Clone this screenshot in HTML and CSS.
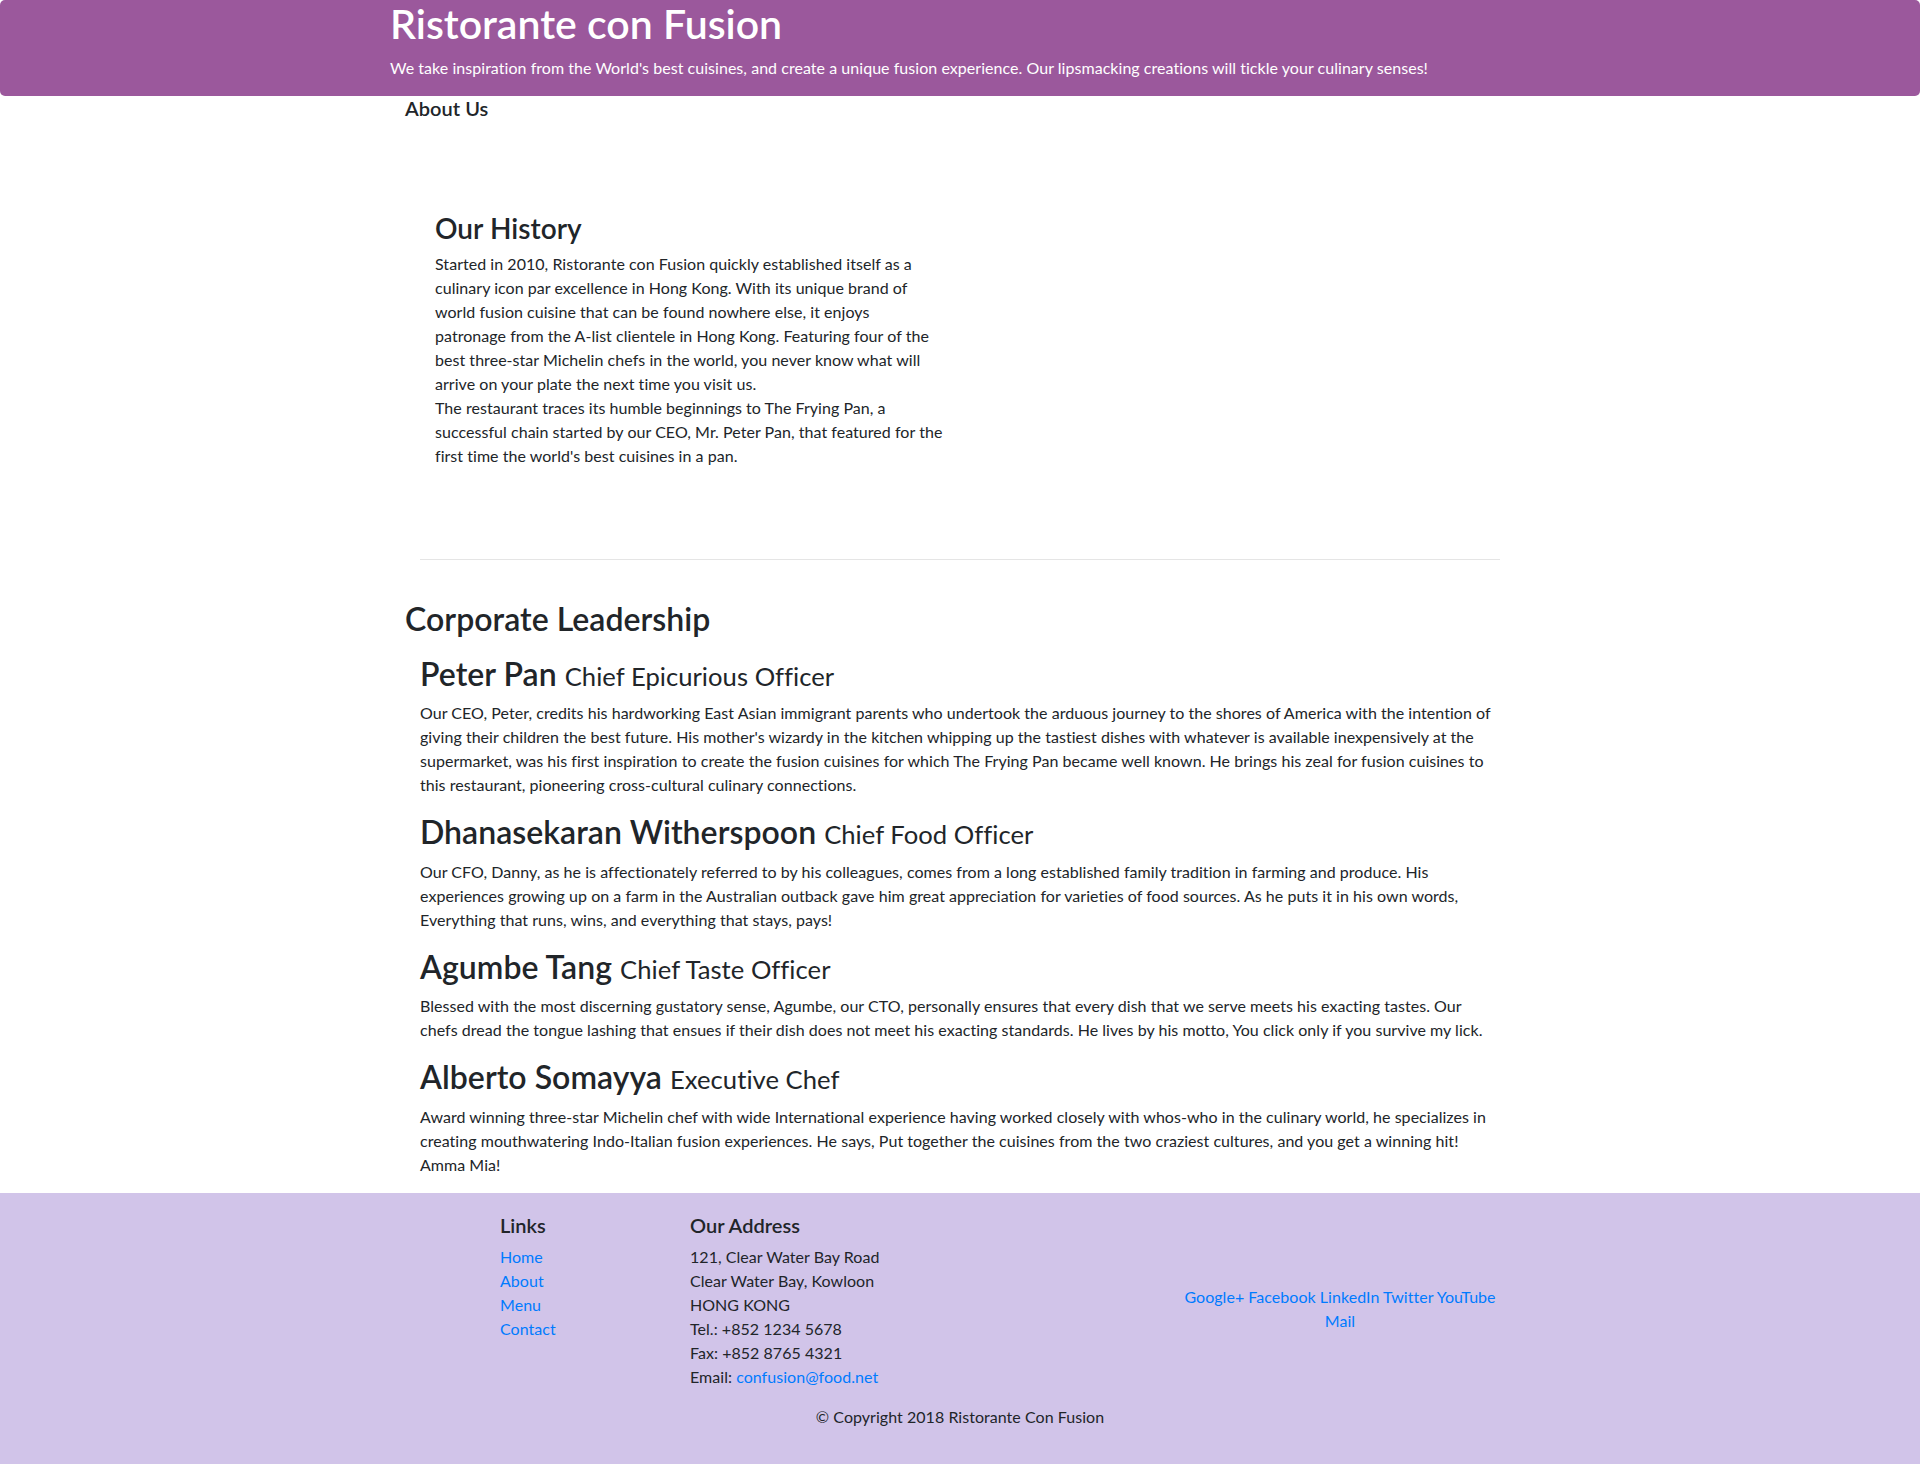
FILE: index.html
```html
<!DOCTYPE html>
<html lang="en">
<head>
<meta charset="utf-8">
<title>Ristorante con Fusion - About Us</title>
<link rel="stylesheet" href="styles.css">
</head>
<body>
<header class="hero">
  <div class="hero-inner">
    <h1 class="hero-title">Ristorante con Fusion</h1>
    <p class="hero-text">We take inspiration from the World's best cuisines, and create a unique fusion experience. Our lipsmacking creations will tickle your culinary senses!</p>
  </div>
</header>

<main class="container">
  <h3 class="page-title">About Us</h3>

  <section class="history">
    <h3 class="history-title">Our History</h3>
    <p class="history-text">Started in 2010, Ristorante con Fusion quickly established itself as a culinary icon par excellence in Hong Kong. With its unique brand of world fusion cuisine that can be found nowhere else, it enjoys<br>patronage from the A-list clientele in Hong Kong. Featuring four of the best three-star Michelin chefs in the world, you never know what will arrive on your plate the next time you visit us.<br>The restaurant traces its humble beginnings to The Frying Pan, a successful chain started by our CEO, Mr. Peter Pan, that featured for the first time the world's best cuisines in a pan.</p>
  </section>

  <hr class="divider">

  <h2 class="section-title">Corporate Leadership</h2>

  <div class="leaders">
    <div class="leader">
      <h2 class="leader-name">Peter Pan <small class="leader-role">Chief Epicurious Officer</small></h2>
      <p class="leader-text">Our CEO, Peter, credits his hardworking East Asian immigrant parents who undertook the arduous journey to the shores of America with the intention of giving their children the best future. His mother's wizardy in the kitchen whipping up the tastiest dishes with whatever is available inexpensively at the supermarket, was his first inspiration to create the fusion cuisines for which The Frying Pan became well known. He brings his zeal for fusion cuisines to this restaurant, pioneering cross-cultural culinary connections.</p>
    </div>
    <div class="leader">
      <h2 class="leader-name">Dhanasekaran Witherspoon <small class="leader-role">Chief Food Officer</small></h2>
      <p class="leader-text">Our CFO, Danny, as he is affectionately referred to by his colleagues, comes from a long established family tradition in farming and produce. His experiences growing up on a farm in the Australian outback gave him great appreciation for varieties of food sources. As he puts it in his own words, Everything that runs, wins, and everything that stays, pays!</p>
    </div>
    <div class="leader">
      <h2 class="leader-name">Agumbe Tang <small class="leader-role">Chief Taste Officer</small></h2>
      <p class="leader-text">Blessed with the most discerning gustatory sense, Agumbe, our CTO, personally ensures that every dish that we serve meets his exacting tastes. Our chefs dread the tongue lashing that ensues if their dish does not meet his exacting standards. He lives by his motto, You click only if you survive my lick.</p>
    </div>
    <div class="leader">
      <h2 class="leader-name">Alberto Somayya <small class="leader-role">Executive Chef</small></h2>
      <p class="leader-text">Award winning three-star Michelin chef with wide International experience having worked closely with whos-who in the culinary world, he specializes in creating mouthwatering Indo-Italian fusion experiences. He says, Put together the cuisines from the two craziest cultures, and you get a winning hit! Amma Mia!</p>
    </div>
  </div>
</main>

<footer class="footer">
  <div class="footer-row">
    <div class="footer-links">
      <h5 class="footer-heading">Links</h5>
      <ul class="link-list">
        <li><a href="#">Home</a></li>
        <li><a href="#">About</a></li>
        <li><a href="#">Menu</a></li>
        <li><a href="#">Contact</a></li>
      </ul>
    </div>
    <div class="footer-address">
      <h5 class="footer-heading">Our Address</h5>
      <address class="address">
        121, Clear Water Bay Road<br>
        Clear Water Bay, Kowloon<br>
        HONG KONG<br>
        Tel.: +852 1234 5678<br>
        Fax: +852 8765 4321<br>
        Email: <a href="#">confusion@food.net</a>
      </address>
    </div>
    <div class="footer-social">
      <a href="#">Google+</a>
      <a href="#">Facebook</a>
      <a href="#">LinkedIn</a>
      <a href="#">Twitter</a>
      <a href="#">YouTube</a>
      <a href="#">Mail</a>
    </div>
  </div>
  <p class="copyright">© Copyright 2018 Ristorante Con Fusion</p>
</footer>
</body>
</html>
```

FILE: styles.css
```css
* { box-sizing: border-box; }

body {
  margin: 0;
  font-family: Lato, "Noto Sans", sans-serif;
  font-size: 16px;
  line-height: 1.5;
  letter-spacing: 0.04px;
  color: #212529;
  background: #fff;
}

a { color: #007bff; text-decoration: none; }

/* Header */
.hero {
  background: #9b589c;
  border-radius: 5px;
  height: 96px;
  color: #fff;
}
.hero-inner {
  padding: 1px 0 0 390px;
}
.hero-title {
  margin: 0;
  font-size: 41px;
  font-weight: 600;
  line-height: 46px;
  letter-spacing: 0;
}
.hero-text {
  margin: 9px 0 0;
  font-size: 16px;
  line-height: 24px;
}

/* Main */
.container {
  width: 1140px;
  margin: 0 auto;
}
.page-title {
  margin: 0 0 0 15px;
  font-size: 20px;
  font-weight: 600;
  line-height: 1.2;
}
.history {
  padding: 92px 0 0 45px;
  width: 555px;
}
.history-title {
  margin: 0 0 6px;
  font-size: 28px;
  font-weight: 600;
  line-height: 1.2;
}
.history-text {
  margin: 0 0 16px;
}
.divider {
  border: 0;
  border-top: 1px solid rgba(0, 0, 0, 0.1);
  margin: 91px 0 0 30px;
  width: 1080px;
}
.section-title {
  margin: 40px 0 8px 15px;
  font-size: 32px;
  font-weight: 600;
  line-height: 1.2;
}
.leaders {
  margin: 17px 0 0 30px;
  width: 1080px;
}
.leader-name {
  margin: 0 0 8px;
  font-size: 32px;
  font-weight: 600;
  line-height: 1.2;
}
.leader-role {
  font-size: 80%;
  font-weight: 400;
}
.leader-text {
  margin: 0 0 16px;
}

/* Footer */
.footer {
  background: #d1c4e9;
  padding: 20px 0;
}
.footer-row {
  width: 1140px;
  margin: 0 auto;
  display: flex;
}
.footer-links {
  margin-left: 95px;
  width: 190px;
  padding: 0 15px;
}
.footer-address {
  width: 475px;
  padding: 0 15px;
}
.footer-social {
  width: 380px;
  padding: 0 22px;
  align-self: center;
  text-align: center;
}
.footer-heading {
  margin: 0 0 8px;
  font-size: 20px;
  font-weight: 600;
  line-height: 1.2;
}
.link-list {
  list-style: none;
  margin: 0;
  padding: 0;
}
.address {
  font-style: normal;
  margin: 0 0 16px;
}
.copyright {
  margin: 0 0 16px;
  text-align: center;
}
```
